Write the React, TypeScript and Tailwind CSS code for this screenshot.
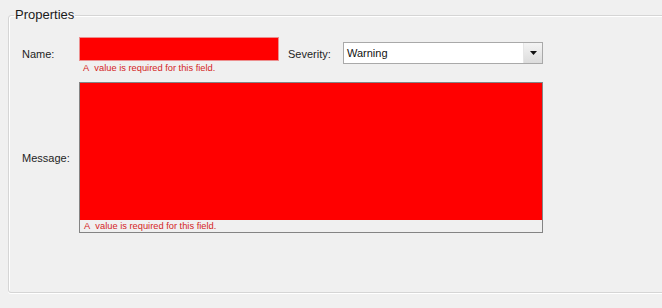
import React from "react";

const font = { fontFamily: '"Liberation Sans", Arial, sans-serif' };

function ErrorText() {
  return (
    <div className="text-[9.3px] leading-[11px] text-[#d42424] pl-[4px] whitespace-nowrap">
      A&nbsp; value is required for this field.
    </div>
  );
}

export default function App() {
  return (
    <div
      className="w-[662px] h-[308px] bg-[#f0f0f0] overflow-hidden text-[11px] text-[#1e1e1e]"
      style={font}
    >
      <fieldset className="ml-[8px] mt-[7px] w-[680px] border border-[#d5d5d5] rounded-[3px] shadow-[inset_1px_1px_0_#ffffff,0_1px_0_#ffffff]">
        <legend className="ml-[5px] px-[1px] text-[13px] leading-[16px] text-[#1a1a1a]">
          Properties
        </legend>
        <div className="h-[269px] pl-[13px] pt-[14px] flex flex-col">
          <div className="flex items-start">
            <div className="w-[57px] mt-[10px] leading-[14px]">Name:</div>
            <div className="w-[200px] flex flex-col">
              <div className="h-[24px] bg-[#ff0000] border border-[#ec8f8f]" />
              <div className="mt-[2px]">
                <ErrorText />
              </div>
            </div>
            <div className="w-[55px] ml-[9px] mt-[10px] leading-[14px]">Severity:</div>
            <div className="mt-[5px] w-[200px] h-[22px] bg-white border border-[#a9a9a9] flex items-stretch">
              <div className="flex-1 flex items-center pl-[3px] leading-[14px] text-[#111]">
                Warning
              </div>
              <div className="w-[19px] bg-gradient-to-b from-[#f4f4f4] to-[#dcdcdc] border-l border-[#e6e6e6] flex items-center justify-center">
                <svg width="7" height="4" viewBox="0 0 7 4">
                  <path d="M0 0H7L3.5 4Z" fill="#111" />
                </svg>
              </div>
            </div>
          </div>
          <div className="flex items-center mt-[8px]">
            <div className="w-[57px] leading-[14px]">Message:</div>
            <div className="w-[464px] h-[151px] border border-[#848484] flex flex-col">
              <div className="h-[137px] bg-[#ff0000]" />
              <div className="flex-1 bg-[#f0f0f0] pt-[1px]">
                <ErrorText />
              </div>
            </div>
          </div>
        </div>
      </fieldset>
    </div>
  );
}
